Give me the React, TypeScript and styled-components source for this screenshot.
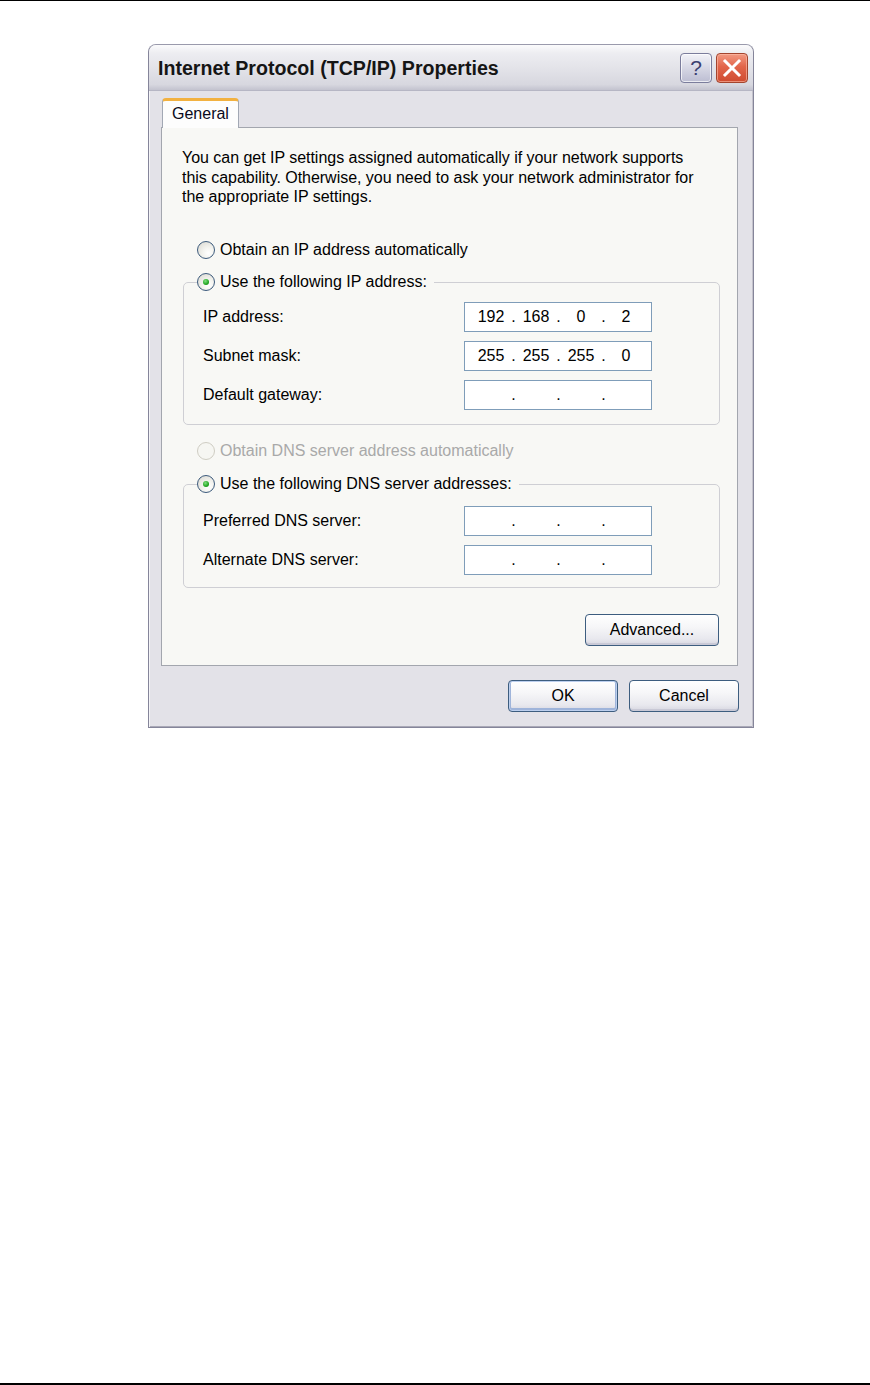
import React from "react";
import styled, { createGlobalStyle } from "styled-components";

const GlobalStyle = createGlobalStyle`
  html, body { margin: 0; padding: 0; background: #ffffff; }
  body { font-family: "Liberation Sans", Arial, sans-serif; color: #000; }
  * { box-sizing: border-box; }
`;

const Page = styled.div`
  width: 870px;
  height: 1385px;
  border-top: 1px solid #000;
  border-bottom: 2px solid #000;
  padding: 43px 0 0 148px;
  background: #fff;
`;

const Dialog = styled.div`
  width: 606px;
  height: 684px;
  border: 1px solid #85859a;
  border-top-color: #9a9aac;
  border-radius: 8px 8px 0 0;
  display: flex;
  flex-direction: column;
  background: #e3e2e8;
  overflow: hidden;
  box-shadow: inset 1px 0 0 #f4f4f7, inset -1px 0 0 #c4c3cc, inset 0 -1px 0 #a9a8b6;
`;

const TitleBar = styled.div`
  height: 46px;
  flex: none;
  display: flex;
  align-items: center;
  padding: 0 5px 0 9px;
  background: linear-gradient(
    #fbfbfc 0%,
    #ededf1 18%,
    #e2e2e8 55%,
    #d7d7df 88%,
    #c3c3cf 100%
  );
  border-bottom: 1px solid #b6b6c4;
`;

const Title = styled.div`
  flex: 1;
  font-family: "Liberation Sans", Arial, sans-serif;
  font-weight: bold;
  font-size: 19.6px;
  color: #151515;
  padding-top: 1px;
`;

const CaptionButton = styled.div<{ $kind: "help" | "close" }>`
  width: 32px;
  height: 30px;
  margin-left: 4px;
  border-radius: 4px;
  display: flex;
  align-items: center;
  justify-content: center;
  border: 1px solid ${(p) => (p.$kind === "close" ? "#a3452e" : "#7b7d9c")};
  background: ${(p) =>
    p.$kind === "close"
      ? "linear-gradient(#f29a83 0%, #e2654a 45%, #cf4b30 100%)"
      : "linear-gradient(#f3f3f8 0%, #d6d7e4 50%, #bcbdd2 100%)"};
  box-shadow: inset 0 0 0 1px
    ${(p) => (p.$kind === "close" ? "rgba(255,190,170,0.6)" : "rgba(255,255,255,0.7)")};
  color: #3a4070;
  font-family: "Liberation Sans", Arial, sans-serif;
  font-size: 21px;
`;

const Body = styled.div`
  flex: 1;
  display: flex;
  flex-direction: column;
  padding: 7px 15px 0 12px;
`;

const TabStrip = styled.div`
  height: 29px;
  display: flex;
  align-items: flex-end;
  padding-left: 1px;
`;

const Tab = styled.div`
  width: 77px;
  height: 30px;
  margin-bottom: -1px;
  position: relative;
  z-index: 1;
  background: #fdfdfd;
  border: 1px solid #a2a8b4;
  border-bottom: none;
  border-top: 3px solid #f2b140;
  border-radius: 4px 4px 0 0;
  font-size: 16px;
  color: #0a0a20;
  padding: 3px 0 0 9px;
  line-height: 19px;
`;

const Panel = styled.div`
  height: 539px;
  border: 1px solid #a3a6ae;
  background: #f8f8f5;
  display: flex;
  flex-direction: column;
  padding: 20px 17px 0 20px;
  font-size: 16px;
  color: #000;
`;

const Intro = styled.p`
  margin: 0;
  line-height: 19.5px;
  height: 58.5px;
  white-space: nowrap;
  letter-spacing: -0.03px;
`;

const RadioRow = styled.div<{ $top: number; $disabled?: boolean }>`
  height: 22px;
  margin-top: ${(p) => p.$top}px;
  margin-left: 15px;
  display: flex;
  align-items: center;
  gap: 5px;
  color: ${(p) => (p.$disabled ? "#a9a9a9" : "#000")};
`;

const RadioCircle = styled.span<{ $checked?: boolean; $disabled?: boolean }>`
  width: 18px;
  height: 18px;
  flex: none;
  border-radius: 50%;
  border: 1px solid ${(p) => (p.$disabled ? "#cfcdc3" : "#3c5a7c")};
  background: ${(p) =>
    p.$disabled
      ? "#f6f6f2"
      : "radial-gradient(circle at 65% 70%, #ffffff 0%, #f4f4f0 35%, #d8d7cf 100%)"};
  display: flex;
  align-items: center;
  justify-content: center;
  &::after {
    content: "";
    display: ${(p) => (p.$checked ? "block" : "none")};
    width: 6px;
    height: 6px;
    border-radius: 50%;
    background: radial-gradient(circle at 40% 35%, #7ee07e 0%, #22a522 60%, #138013 100%);
  }
`;

const Group = styled.fieldset<{ $top: number }>`
  margin: ${(p) => p.$top}px 0 0 1px;
  padding: 0;
  border: 1px solid #cfcfd4;
  border-radius: 5px;
  min-inline-size: 0;
`;

const Legend = styled.legend`
  margin-left: 13px;
  padding: 0 7px 0 0;
  height: 22px;
  display: flex;
  align-items: center;
  gap: 5px;
`;

const Rows = styled.div<{ $top: number; $bottom: number }>`
  display: flex;
  flex-direction: column;
  gap: 9px;
  padding: ${(p) => p.$top}px 67px ${(p) => p.$bottom}px 19px;
`;

const FieldRow = styled.div`
  height: 30px;
  display: flex;
  align-items: center;
  justify-content: space-between;
`;

const FieldLabel = styled.span``;

const IpBox = styled.div`
  width: 188px;
  height: 30px;
  border: 1px solid #7f9db9;
  background: #fff;
  display: flex;
  align-items: center;
  padding-left: 8px;
  font-size: 16px;
`;

const Octet = styled.span`
  width: 36px;
  text-align: center;
`;

const Dot = styled.span`
  width: 9px;
  text-align: center;
`;

const Button = styled.button<{ $default?: boolean; $width: number }>`
  width: ${(p) => p.$width}px;
  height: 32px;
  border: 1px solid #3d5d7f;
  border-radius: 4px;
  background: linear-gradient(#ffffff 0%, #f6f6f8 40%, #e8e8ee 80%, #d6d6e0 100%);
  box-shadow: ${(p) =>
    p.$default
      ? "inset 0 0 0 1px #bccfee, inset 0 -1px 0 2px #9fb4da"
      : "inset 0 -2px 0 #c9c9d6"};
  font-family: "Liberation Sans", Arial, sans-serif;
  font-size: 16px;
  color: #000;
  padding: 0;
`;

const AdvancedWrap = styled.div`
  margin-top: 26px;
  display: flex;
  justify-content: flex-end;
  padding-right: 1px;
`;

const Footer = styled.div`
  display: flex;
  justify-content: flex-end;
  gap: 11px;
  padding-top: 14px;
  margin-right: -1px;
`;

type Ip = [string, string, string, string];

function IpField({ value }: { value?: Ip }) {
  const v = value ?? ["", "", "", ""];
  return (
    <IpBox>
      <Octet>{v[0]}</Octet>
      <Dot>.</Dot>
      <Octet>{v[1]}</Octet>
      <Dot>.</Dot>
      <Octet>{v[2]}</Octet>
      <Dot>.</Dot>
      <Octet>{v[3]}</Octet>
    </IpBox>
  );
}

export default function App() {
  return (
    <>
      <GlobalStyle />
      <Page>
        <Dialog>
          <TitleBar>
            <Title>Internet Protocol (TCP/IP) Properties</Title>
            <CaptionButton $kind="help">?</CaptionButton>
            <CaptionButton $kind="close">
              <svg width="20" height="20" viewBox="0 0 20 20">
                <path d="M3 3 L17 17 M17 3 L3 17" stroke="#ffffff" strokeWidth="3" strokeLinecap="square" />
              </svg>
            </CaptionButton>
          </TitleBar>
          <Body>
            <TabStrip>
              <Tab>General</Tab>
            </TabStrip>
            <Panel>
              <Intro>
                You can get IP settings assigned automatically if your network supports
                <br />
                this capability. Otherwise, you need to ask your network administrator for
                <br />
                the appropriate IP settings.
              </Intro>
              <RadioRow $top={32.5}>
                <RadioCircle />
                Obtain an IP address automatically
              </RadioRow>
              <Group $top={10}>
                <Legend>
                  <RadioCircle $checked />
                  Use the following IP address:
                </Legend>
                <Rows $top={9} $bottom={14}>
                  <FieldRow>
                    <FieldLabel>IP address:</FieldLabel>
                    <IpField value={["192", "168", "0", "2"]} />
                  </FieldRow>
                  <FieldRow>
                    <FieldLabel>Subnet mask:</FieldLabel>
                    <IpField value={["255", "255", "255", "0"]} />
                  </FieldRow>
                  <FieldRow>
                    <FieldLabel>Default gateway:</FieldLabel>
                    <IpField />
                  </FieldRow>
                </Rows>
              </Group>
              <RadioRow $top={15} $disabled>
                <RadioCircle $disabled />
                Obtain DNS server address automatically
              </RadioRow>
              <Group $top={11}>
                <Legend>
                  <RadioCircle $checked />
                  Use the following DNS server addresses:
                </Legend>
                <Rows $top={11} $bottom={12}>
                  <FieldRow>
                    <FieldLabel>Preferred DNS server:</FieldLabel>
                    <IpField />
                  </FieldRow>
                  <FieldRow>
                    <FieldLabel>Alternate DNS server:</FieldLabel>
                    <IpField />
                  </FieldRow>
                </Rows>
              </Group>
              <AdvancedWrap>
                <Button $width={134}>Advanced...</Button>
              </AdvancedWrap>
            </Panel>
            <Footer>
              <Button $default $width={110}>OK</Button>
              <Button $width={110}>Cancel</Button>
            </Footer>
          </Body>
        </Dialog>
      </Page>
    </>
  );
}
